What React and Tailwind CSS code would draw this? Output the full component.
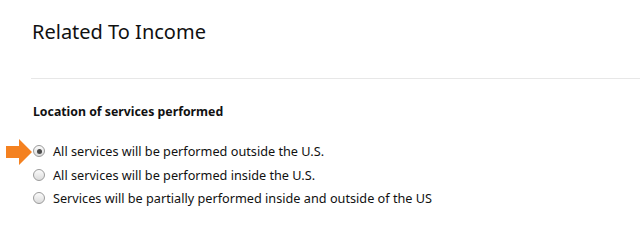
const options = [
  "All services will be performed outside the U.S.",
  "All services will be performed inside the U.S.",
  "Services will be partially performed inside and outside of the US",
];

function Radio({ checked }) {
  return (
    <span className="relative flex h-[12px] w-[12px] shrink-0 items-center justify-center rounded-full border border-[#9b9b9b] bg-gradient-to-b from-[#fbfbfb] to-[#dcdcdc]">
      {checked && <span className="h-[5px] w-[5px] rounded-full bg-[#4a4a4a]" />}
    </span>
  );
}

function Arrow() {
  return (
    <svg width="26" height="26" viewBox="0 0 26 26" className="absolute left-[6px] top-0">
      <path d="M0 7 H13 V0 L26 13 L13 26 V19 H0 Z" fill="#f48120" />
    </svg>
  );
}

export default function App() {
  return (
    <div className="relative h-[231px] w-[640px] overflow-hidden bg-white font-['Noto_Sans',sans-serif] text-[#111]">
      <div className="pl-[31px]">
        <h1 className="pt-[18px] pl-[1px] text-[20px] leading-[28px] font-normal text-[#111]">Related To Income</h1>
        <div className="mt-[32px] h-px bg-[#e7e7e7]" />
        <div className="pl-[2px] pt-[24px]">
          <h2 className="text-[12.3px] leading-[18px] font-bold">
            Location of services performed
          </h2>
          <div className="mt-[21px] flex flex-col gap-[5.5px]">
            {options.map((o, i) => (
              <label key={o} className="flex h-[18px] items-center gap-[8px] text-[12.7px] leading-[18px]">
                <Radio checked={i === 0} />
                <span>{o}</span>
              </label>
            ))}
          </div>
        </div>
      </div>
      <div className="pointer-events-none absolute left-0 top-[139px] h-[26px] w-[40px]">
        <Arrow />
      </div>
    </div>
  );
}
